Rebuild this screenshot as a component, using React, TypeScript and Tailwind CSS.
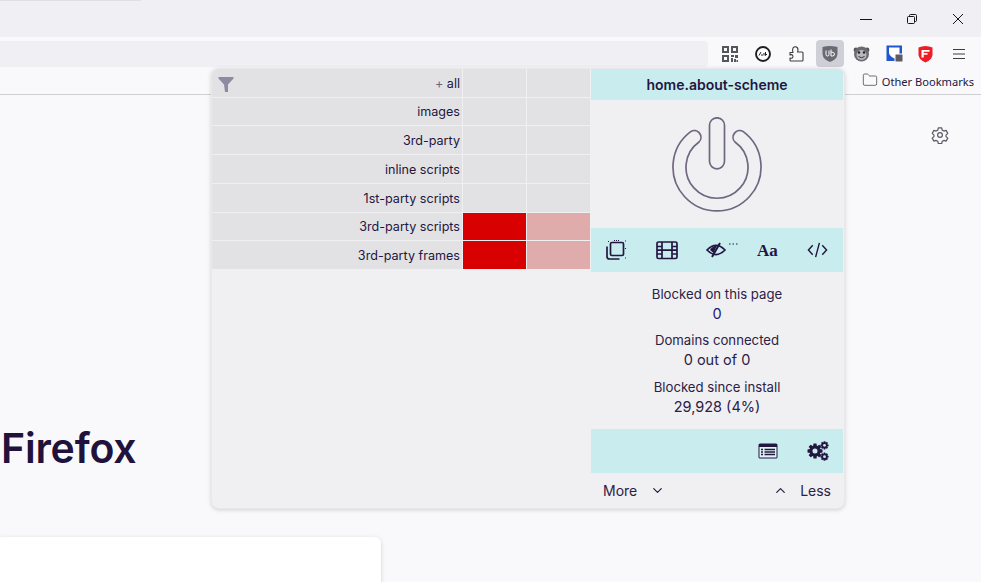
import React from "react";
import { ChevronDown, ChevronUp, Folder } from "lucide-react";

const rows = ["+ all", "images", "3rd-party", "inline scripts", "1st-party scripts", "3rd-party scripts", "3rd-party frames"];
const heights = ["h-[28px]", "h-[27px]", "h-[28px]", "h-[28px]", "h-[28px]", "h-[27px]", "h-[28px]"];

function Gear({ x, y, r }: { x: number; y: number; r: number }) {
  return (
    <g transform={`translate(${x} ${y})`}>
      {[0, 45, 90, 135].map((a) => (
        <rect key={a} x={-r * 0.28} y={-r * 1.25} width={r * 0.56} height={r * 2.5} rx={r * 0.1} fill="#231640" transform={`rotate(${a})`} />
      ))}
      <circle r={r * 0.95} fill="#231640" />
      <circle r={r * 0.42} fill="#c9edef" />
    </g>
  );
}

function Row({ label, danger, h }: { label: string; danger: boolean; h: string }) {
  const all = label.startsWith("+");
  return (
    <div className={`flex ${h} gap-px`}>
      <div className="flex-1 flex items-center justify-end pr-[2px] pt-[2px] bg-[#e2e2e4] text-[12.6px] text-[#231640] relative">
        {all && (
          <svg className="absolute left-[6px] top-[7px]" width="16" height="16" viewBox="0 0 16 16">
            <path d="M0.5 1 H15.5 V2.5 L10 8.5 V16 H7 L6 8.5 L0.5 2.5Z" fill="#8f8a9f" />
          </svg>
        )}
        {all ? (
          <span>
            <span className="text-[#6b6680]">+</span> all
          </span>
        ) : (
          label
        )}
      </div>
      <div className={`w-[63px] ${danger ? "bg-[#d80000]" : "bg-[#e2e2e4]"}`} />
      <div className={`w-[63px] ${danger ? "bg-[#e0abab]" : "bg-[#e2e2e4]"}`} />
    </div>
  );
}

export default function App() {
  return (
    <div className="relative w-[981px] h-[582px] overflow-hidden bg-[#f9f9fb] font-['Inter',sans-serif] text-[#231640]">
      {/* title bar */}
      <div className="h-[37px] bg-[#f0f0f4] flex items-start">
        <div className="w-[141px] h-px bg-[#e0e0e2]" />
        <div className="flex-1" />
        <div className="flex items-center h-[37px] pr-[17px] gap-[34px]">
          <svg width="12" height="12" viewBox="0 0 12 12" stroke="#15141a" strokeWidth="1">
            <path d="M0 6.5H12" />
          </svg>
          <svg width="12" height="12" viewBox="0 0 12 12" fill="none" stroke="#15141a" strokeWidth="1">
            <rect x="1.5" y="3.5" width="7" height="7" rx="1" />
            <path d="M3.5 3.5 V2.5 Q3.5 1.5 4.5 1.5 H9.5 Q10.5 1.5 10.5 2.5 V7.5 Q10.5 8.5 9.5 8.5 H8.5" />
          </svg>
          <svg width="12" height="12" viewBox="0 0 12 12" stroke="#15141a" strokeWidth="1">
            <path d="M1 1L11 11M11 1L1 11" />
          </svg>
        </div>
      </div>
      {/* nav bar */}
      <div className="h-[30px] flex items-end">
        <div className="w-[708px] h-[26px] bg-[#f0f0f4] rounded-r-[4px]" />
        <div className="flex-1 h-[30px] relative">
          <svg className="absolute left-[14px] top-[9px]" width="16" height="16" viewBox="0 0 16 16" fill="#55555c">
            <path d="M0 0h7v7H0zM2 2v3h3V2zM9 0h7v7H9zM11 2v3h3V2zM0 9h7v7H0zM2 11v3h3v-3zM9 9h3v2h-3zM13 9h3v3h-3zM9 12h2v4H9zM12 13h2v3h-2zM14.5 14H16v2h-1.5z" fillRule="evenodd" />
          </svg>
          <svg className="absolute left-[47px] top-[9px]" width="16" height="16" viewBox="0 0 16 16">
            <circle cx="8" cy="8" r="7" fill="#fff" stroke="#1f1e26" strokeWidth="1.9" />
            <path d="M4 9.5 L6 6 M6 9 H8 M9 7 V9.5 M10.5 6 V9.5 L12 8" stroke="#1f1e26" strokeWidth="1" fill="none" />
          </svg>
          <svg className="absolute left-[81px] top-[9px]" width="16" height="16" viewBox="0 0 16 16" fill="none" stroke="#3c3c44" strokeWidth="1.1" strokeLinejoin="round">
            <path d="M1 6.5 H4 C4 6 3.6 5.4 3.6 4.2 C3.6 2 5 0.8 6.3 0.8 C7.8 0.8 9 2 9 4 C9 5 8.6 5.6 8.5 6 L13 6 C13.8 6 14 6.5 14 7 V14 C14 14.6 13.6 15 13 15 H2 C1.4 15 1 14.6 1 14 V12 C2 12.3 3.4 12.2 3.9 11 C4.2 10 3.5 8.6 2.5 8.6 C2 8.6 1.4 8.8 1 9 Z" />
          </svg>
          <div className="absolute left-[108px] top-[3px] w-[28px] h-[27px] rounded-[4px] bg-[#cfcfd8] flex items-center justify-center">
            <svg width="16" height="18" viewBox="0 0 16 18">
              <path d="M0.5 2 Q8 0 15.5 2 V9 Q15 14.5 8 17 Q1 14.5 0.5 9Z" fill="#6a6a72" />
              <path d="M4 5.5 V9.5 Q4 11 5.5 11 Q7 11 7 9.5 V5.5 M9 4.5 V11 H10.5 Q12.5 11 12.5 9 Q12.5 7 9 7" stroke="#fff" strokeWidth="1" fill="none" />
            </svg>
          </div>
          <svg className="absolute left-[145px] top-[8px]" width="17" height="17" viewBox="0 0 17 17">
            <circle cx="3" cy="5" r="2.4" fill="#55555c" />
            <circle cx="14" cy="5" r="2.4" fill="#55555c" />
            <circle cx="8.5" cy="9" r="7.5" fill="#6b6b72" />
            <circle cx="8.5" cy="10" r="5" fill="#b9b9bd" />
            <circle cx="6" cy="7.5" r="1.2" fill="#222" />
            <circle cx="11" cy="7.5" r="1.2" fill="#222" />
            <path d="M5.5 11.5 Q8.5 14 11.5 11.5" stroke="#333" fill="none" />
          </svg>
          <svg className="absolute left-[178px] top-[8px]" width="17" height="17" viewBox="0 0 17 17">
            <rect x="0.5" y="0.5" width="15.5" height="15.5" fill="#1f57cf" />
            <path d="M3 2.5 H13.5 V8 Q13 11 8.2 13.5 Q3.5 11 3 8Z" fill="#fff" />
            <rect x="9" y="9" width="8" height="8" rx="1" fill="#5c5c64" stroke="#f9f9fb" />
          </svg>
          <svg className="absolute left-[210px] top-[8px]" width="15" height="18" viewBox="0 0 15 18">
            <path d="M0.5 2.5 Q7.5 -0.5 14.5 2.5 V10 Q14 14.5 7.5 17.5 Q1 14.5 0.5 10Z" fill="#ee1c25" />
            <path d="M3.5 5 H11.5 V6.7 H5.7 V8 H9.5 V9.7 H5.7 V12.5 H3.5Z" fill="#fff" />
          </svg>
          <svg className="absolute left-[244px] top-[10px]" width="14" height="14" viewBox="0 0 14 14" stroke="#3c3c44" strokeWidth="1.1">
            <path d="M1 2.5H13M1 7H13M1 11.5H13" />
          </svg>
        </div>
      </div>
      {/* bookmarks bar */}
      <div className="h-[28px] border-b border-[#cfcfd1] flex items-center justify-end pr-[7px] gap-[4px]">
        <Folder size={16} strokeWidth={1.1} className="text-[#3c3c44] mb-[1px]" />
        <span className="font-['Noto_Sans',sans-serif] text-[11.1px] leading-none pt-[3px] text-[#231640]">Other Bookmarks</span>
      </div>
      {/* page */}
      <div className="relative h-[487px]">
        <div className="flex justify-end pr-[32px] pt-[31px]">
          <svg width="18" height="18" viewBox="0 0 24 24" fill="none" stroke="#5b5b66" strokeWidth="1.6" strokeLinejoin="round">
            <path d="M9.7 2.5h4.6l.6 3 2.3 1.3 2.9-1 2.3 4-2.3 2v2.4l2.3 2-2.3 4-2.9-1-2.3 1.3-.6 3H9.7l-.6-3-2.3-1.3-2.9 1-2.3-4 2.3-2v-2.4l-2.3-2 2.3-4 2.9 1 2.3-1.3z" />
            <circle cx="12" cy="12" r="3.2" />
          </svg>
        </div>
        <div className="pl-px pt-[281px] text-[41px] leading-[47px] font-semibold tracking-[-0.2px] text-[#20123a]">Firefox</div>
        <div className="mt-[65px] w-[381px] h-[60px] bg-white rounded-tr-[6px] shadow-[0_1px_4px_rgba(58,57,68,0.2)]" />
      </div>

      {/* uBlock popup */}
      <div className="absolute left-[211px] top-[68px] w-[634px] h-[441px] bg-[#f0f0f2] rounded-[8px] border border-[#e8e8ea] shadow-[0_1px_4px_rgba(0,0,0,0.16)] flex overflow-hidden">
        <div className="w-[378px] flex flex-col gap-px shrink-0">
          {rows.map((r, i) => (
            <Row key={r} label={r} danger={i >= 5} h={heights[i]} />
          ))}
        </div>
        <div className="w-[252px] ml-px flex flex-col items-stretch text-[13.2px]">
          <div className="h-[31px] bg-[#c9edef] flex items-center justify-center text-[14px] font-semibold">home.about-scheme</div>
          <div className="h-[128px] flex justify-center pt-[17px]">
            <svg width="90" height="96" viewBox="0 0 90 96" fill="none" stroke="#6f6780" strokeWidth="1.7">
              <rect x="37.5" y="0.8" width="15" height="51" rx="7.5" />
              <path d="M18.7 14.6 A44 44 0 1 0 71.3 14.6 A6.7 6.7 0 0 0 63 25 A31 31 0 1 1 27 25 A6.7 6.7 0 0 0 18.7 14.6 Z" />
            </svg>
          </div>
          <div className="h-[44px] bg-[#c9edef] grid grid-cols-5 items-center justify-items-center">
            <svg width="22" height="22" viewBox="0 0 22 22" fill="none" stroke="#231640" strokeWidth="1.7">
              <rect x="5.5" y="3.5" width="13" height="13" rx="1.5" />
              <path d="M2 7.5 V17.5 Q2 20 4.5 20 H14.5" />
              <path d="M3 2.5h1M9 1.5h6M20 2h1M20.5 9v2M20 19h1" strokeWidth="1" strokeDasharray="1 1" />
            </svg>
            <svg width="22" height="20" viewBox="0 0 22 20" fill="none" stroke="#231640" strokeWidth="1.7">
              <rect x="1" y="2" width="20" height="16.5" rx="1.5" />
              <path d="M6 2v16.5M16 2v16.5M1 6.5h5M1 10.2h20M1 14h5M16 6.5h5M16 14h5" />
            </svg>
            <svg className="ml-[10px]" width="32" height="20" viewBox="0 0 32 20" fill="none" stroke="#231640" strokeWidth="1.7">
              <path d="M1 10 Q10 1 19 10 Q10 19 1 10Z" />
              <path d="M6 17 L14 3" strokeWidth="2" />
              <path d="M4 10 Q6 6 11 5.5 L7.5 13Z" fill="#231640" stroke="none" />
              <path d="M23 4h1.5M26.5 4h1.5M30 4h1.5" strokeWidth="1" />
            </svg>
            <span className="font-['Liberation_Serif',serif] font-bold text-[17px] leading-none">Aa</span>
            <svg width="21" height="18" viewBox="0 0 22 18" fill="none" stroke="#231640" strokeWidth="1.5">
              <path d="M6 4 L1.5 9 L6 14M16 4 L20.5 9 L16 14M13 1.5 L9 16.5" />
            </svg>
          </div>
          <div className="h-[157px] flex flex-col items-center pt-[14px] text-[#2b2146]">
            <div className="leading-[17px]">Blocked on this page</div>
            <div className="text-[14.5px] leading-[21px] h-[29px] text-[#1d1a70]">0</div>
            <div className="leading-[17px]">Domains connected</div>
            <div className="text-[14.5px] leading-[21px] h-[30px]">0 out of 0</div>
            <div className="leading-[17px]">Blocked since install</div>
            <div className="text-[14.5px] leading-[21px]">29,928 (4%)</div>
          </div>
          <div className="h-[44px] bg-[#c9edef] flex items-center justify-end gap-[29px] pr-[14px]">
            <svg width="20" height="16" viewBox="0 0 20 16">
              <rect x="0.5" y="0.5" width="19" height="15" rx="1.5" fill="#231640" />
              <rect x="1.5" y="4" width="17" height="10.5" fill="#e0f2f4" />
              <path d="M3 6.5h2M3 9h2M3 11.5h2M6.5 6.5H17M6.5 9H17M6.5 11.5H17" stroke="#231640" strokeWidth="1.3" />
            </svg>
            <svg width="22" height="20" viewBox="0 0 22 20">
              <Gear x={8} y={10} r={6} />
              <Gear x={17.5} y={4.3} r={3.3} />
              <Gear x={17.5} y={15.7} r={3.3} />
            </svg>
          </div>
          <div className="flex-1 flex items-center justify-between px-[12px] text-[14px] text-[#2b2146]">
            <div className="flex items-center gap-[13px]">
              <span>More</span>
              <ChevronDown size={15} strokeWidth={2} />
            </div>
            <div className="flex items-center gap-[12px]">
              <ChevronUp size={15} strokeWidth={2} />
              <span>Less</span>
            </div>
          </div>
        </div>
      </div>
    </div>
  );
}
